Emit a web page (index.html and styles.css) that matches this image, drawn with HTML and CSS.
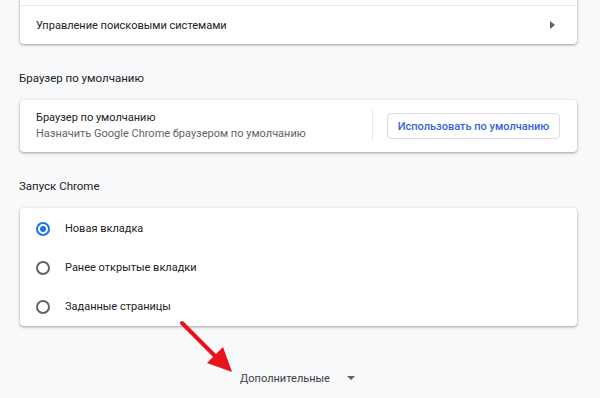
FILE: index.html
```html
<!DOCTYPE html>
<html lang="ru">
<head>
    <meta charset="UTF-8">
    <meta name="viewport" content="width=device-width, initial-scale=1.0">
    <title>Настройки</title>
    <link rel="stylesheet" href="styles.css">
</head>
<body>

<div class="page">
    <!-- поисковая система (верх обрезан) -->
    <div class="card card-top">
        <div class="row row-hidden"></div>
        <div class="row row-link">
            <span>Управление поисковыми системами</span>
            <svg class="arrow-right" width="5" height="8" viewBox="0 0 5 8"><path d="M0 0 L5 4 L0 8 Z" fill="#5f6368"/></svg>
        </div>
    </div>

    <div class="section-title">Браузер по умолчанию</div>
    <div class="card">
        <div class="row row-default">
            <div class="row-text">
                <div class="primary">Браузер по умолчанию</div>
                <div class="secondary">Назначить Google Chrome браузером по умолчанию</div>
            </div>
            <div class="divider"></div>
            <button class="btn">Использовать по умолчанию</button>
        </div>
    </div>

    <div class="section-title">Запуск Chrome</div>
    <div class="card card-radios">
        <label class="radio-row"><span class="radio checked"></span>Новая вкладка</label>
        <label class="radio-row"><span class="radio"></span>Ранее открытые вкладки</label>
        <label class="radio-row"><span class="radio"></span>Заданные страницы</label>
    </div>

    <div class="advanced">
        <span>Дополнительные</span>
        <svg width="8" height="4" viewBox="0 0 8 4"><path d="M0 0 L8 0 L4 4 Z" fill="#5f6368"/></svg>
    </div>
</div>

<!-- красная стрелка поверх страницы -->
<svg class="pointer" width="600" height="398" viewBox="0 0 600 398">
    <line x1="182" y1="323" x2="220" y2="361" stroke="#e8141c" stroke-width="4" stroke-linecap="round"/>
    <path d="M232 372 L207 363 L223 347 Z" fill="#e8141c"/>
</svg>

</body>
</html>
```

FILE: styles.css
```css
body {
    margin: 0;
    padding: 0;
    background-color: #f8f9fa;
    font-family: Roboto, "Liberation Sans", Arial, sans-serif;
    font-size: 11px;
    color: #202124;
    overflow: hidden;
    height: 398px;
}
.page {
    width: 557px;
    margin-left: 20px;
}
.card {
    background: #fff;
    border-radius: 4px;
    box-shadow: 0 1px 2px 0 rgba(60, 64, 67, 0.3), 0 1px 3px 1px rgba(60, 64, 67, 0.15);
}
.card-top {
    margin-top: -35px;
}
.row {
    display: flex;
    align-items: center;
    padding: 0 16px;
}
.row-hidden {
    height: 40px;
}
.row-link {
    height: 38px;
    border-top: 1px solid #e8eaed;
    justify-content: space-between;
}
.arrow-right {
    margin-right: 6px;
}
.section-title {
    margin: 24px 0 12px -1px;
    height: 20px;
    line-height: 20px;
    font-size: 11.5px;
}
.row-default {
    padding: 10px 17px 10px 16px;
}
.row-text {
    flex: 1;
    line-height: 16px;
}
.secondary {
    color: #5f6368;
}
.divider {
    width: 1px;
    height: 32px;
    background: #e8eaed;
    margin-right: 14px;
}
.btn {
    height: 26px;
    width: 173px;
    padding: 0;
    border: 1px solid #dadce0;
    border-radius: 4px;
    background: #fff;
    color: #3367d6;
    font-family: inherit;
    font-size: 11px;
    font-weight: 500;
}
.card-radios {
    padding-top: 1px;
}
.radio-row {
    display: flex;
    align-items: center;
    height: 39px;
    padding-left: 16px;
    gap: 15px;
}
.radio {
    box-sizing: border-box;
    width: 14px;
    height: 14px;
    border: 2px solid #5f6368;
    border-radius: 50%;
    display: flex;
    align-items: center;
    justify-content: center;
}
.radio.checked {
    border-color: #1a73e8;
}
.radio.checked::after {
    content: "";
    width: 6px;
    height: 6px;
    border-radius: 50%;
    background: #1a73e8;
}
.advanced {
    display: flex;
    align-items: center;
    justify-content: center;
    gap: 17px;
    height: 48px;
    margin-top: 28px;
    color: #3c4043;
    padding-right: 2px;
}
.pointer {
    position: absolute;
    top: 0;
    left: 0;
    pointer-events: none;
}
```
